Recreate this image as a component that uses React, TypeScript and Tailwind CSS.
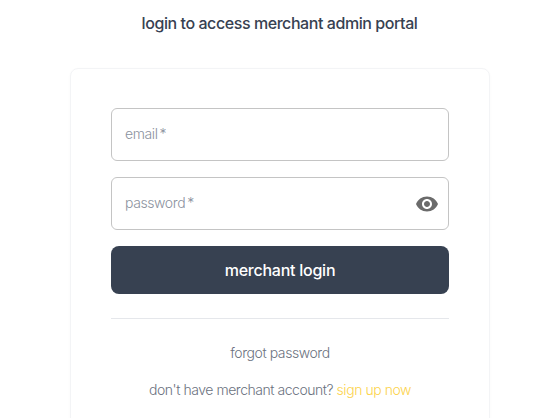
import React from "react";

function Field({ label, children }: { label: string; children?: React.ReactNode }) {
  return (
    <div className="flex h-[53px] items-center justify-between rounded-md border border-[#c4c4c4] bg-white pl-[13px] pr-[9px]">
      <span className="pb-[2px] text-[14px] font-light text-[#8b929e] tracking-[-0.4px] [word-spacing:-1.5px]">{label}</span>
      {children}
    </div>
  );
}

export default function App() {
  return (
    <div className="h-[418px] w-[560px] overflow-hidden bg-white font-['Inter',sans-serif]">
      <h1 className="pt-[14px] pr-px text-center text-[16px] leading-[19px] font-medium tracking-[-0.43px] text-[#374151]">
        login to access merchant admin portal
      </h1>
      <div className="mx-auto mt-[35px] h-[400px] w-[420px] rounded-lg border border-[#f3f4f6] px-10 pt-[39px] shadow-[0_1px_3px_rgba(0,0,0,0.03)]">
        <div className="flex flex-col gap-4">
          <Field label="email *" />
          <Field label="password *">
            <svg viewBox="0 0 24 24" className="h-6 w-6 fill-[#6b6b6b]">
              <path d="M12 4.5C7 4.5 2.73 7.61 1 12c1.73 4.39 6 7.5 11 7.5s9.27-3.11 11-7.5c-1.73-4.39-6-7.5-11-7.5zM12 17c-2.76 0-5-2.24-5-5s2.24-5 5-5 5 2.24 5 5-2.24 5-5 5zm0-8c-1.66 0-3 1.34-3 3s1.34 3 3 3 3-1.34 3-3-1.34-3-3-3z" />
            </svg>
          </Field>
          <button className="h-12 rounded-lg bg-[#374151] text-[16px] font-medium tracking-[-0.25px] text-white">
            merchant login
          </button>
        </div>
        <div className="mt-6 border-t border-[#e5e7eb]" />
        <p className="mt-[24px] text-center text-[14px] leading-[20px] font-light tracking-[-0.43px] text-[#6b7280]">forgot password</p>
        <p className="mt-[17px] text-center text-[14px] leading-[20px] font-light tracking-[-0.46px] text-[#6b7280]">
          don't have merchant account? <span className="text-[#fcd34d]">sign up now</span>
        </p>
      </div>
    </div>
  );
}
